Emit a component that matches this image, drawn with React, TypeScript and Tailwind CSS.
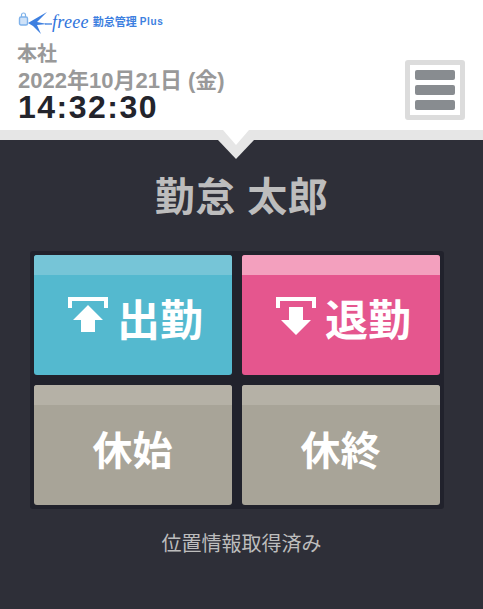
const FONT = "font-['Liberation_Sans','Noto_Sans_CJK_JP',sans-serif]";

function Logo() {
  return (
    <div className="flex h-[24px] items-center">
      <svg width="34" height="24" viewBox="0 0 34 24" className="block">
        <rect x="1.5" y="7" width="8" height="8" rx="1.5" fill="#cfe2f8" stroke="#7fb2ea" strokeWidth="1.4" />
        <path d="M3.5 7V5a2 2 0 0 1 4 0v2" fill="none" stroke="#7fb2ea" strokeWidth="1.2" />
        <path d="M10 13 L29 2 L19 12 L29 14 L19 15 L23 24 L15 16 Z" fill="#3d7fe0" />
        <path d="M27 14 H34" stroke="#3d7fe0" strokeWidth="1.3" />
      </svg>
      <span className="font-['Liberation_Serif',serif] text-[18px] leading-none tracking-[0.3px] text-[#2f74dc] italic">freee</span>
      <span className="ml-[4px] text-[11px] leading-none font-bold text-[#3d7fe0]">勤怠管理</span>
      <span className="ml-[3px] text-[10px] leading-none font-bold tracking-[0.6px] text-[#3d7fe0]">Plus</span>
    </div>
  );
}

function Punch({
  label,
  bg,
  top,
  icon,
}: {
  label: string;
  bg: string;
  top: string;
  icon?: "up" | "down";
}) {
  return (
    <button className={`flex h-[120px] w-[198px] flex-col overflow-hidden rounded-[3px] ${bg}`}>
      <div className={`h-[20px] w-full shrink-0 ${top}`} />
      <div className="flex flex-1 items-center justify-center pb-[10px] text-white">
        {icon === "up" && (
          <svg width="40" height="35" viewBox="0 0 40 35" className="mr-[9px] ml-[6px] -mt-[12px] block">
            <path d="M0 0H40V11H36V4H4V11H0Z" fill="#fff" />
            <path d="M20 8 L35 23 H27 V35 H13 V23 H5 Z" fill="#fff" />
          </svg>
        )}
        {icon === "down" && (
          <svg width="40" height="38" viewBox="0 0 40 38" className="mr-[9px] ml-[6px] -mt-[9px] block">
            <path d="M0 0H40V11H36V4H4V11H0Z" fill="#fff" />
            <path d="M13 10H27V23H35L20 38L5 23H13Z" fill="#fff" />
          </svg>
        )}
        <span className={`${icon ? "mt-[2px] text-[43px]" : "mt-[1px] text-[40px]"} leading-none font-bold`}>{label}</span>
      </div>
    </button>
  );
}

export default function App() {
  return (
    <div className={`flex h-[609px] w-[483px] flex-col overflow-hidden bg-[#2e2f38] ${FONT}`}>
      <header className="flex h-[130px] shrink-0 bg-white">
        <div className="flex-1 pt-[10px] pl-[18px]">
          <Logo />
          <div className="mt-[8px] -ml-[1px] text-[20px] leading-[24px] font-bold text-[#999999]">本社</div>
          <div className="mt-[4px] text-[22px] leading-[21px] font-bold text-[#999999]">2022年10月21日 (金)</div>
          <div className="mt-[1px] text-[32px] leading-[30px] font-bold tracking-[1.5px] text-[#23242c]">14:32:30</div>
        </div>
        <div className="pt-[60px] pr-[18px]">
          <div className="flex h-[60px] w-[60px] flex-col items-center justify-center gap-[5px] rounded-[3px] border-[5px] border-[#dcdcdc] bg-white">
            <div className="h-[10px] w-[40px] rounded-[2px] bg-[#888c90]" />
            <div className="h-[10px] w-[40px] rounded-[2px] bg-[#888c90]" />
            <div className="h-[10px] w-[40px] rounded-[2px] bg-[#888c90]" />
          </div>
        </div>
      </header>
      <div className="relative h-[10px] shrink-0 bg-[#e6e6e6]">
        <svg width="40" height="30" viewBox="0 0 40 30" className="absolute top-0 left-[216px] block">
          <path d="M2 10 H38 L20 29 Z" fill="#e6e6e6" />
          <path d="M7 0 H33 L20 15 Z" fill="#ffffff" />
        </svg>
      </div>
      <main className="flex flex-1 flex-col items-center">
        <h1 className="mt-[33px] text-[40px] leading-[48px] font-bold tracking-[0.5px] text-[#bdbdbd]">勤怠 太郎</h1>
        <div className="mt-[30px] mr-[10px] grid grid-cols-2 gap-[10px] rounded-[3px] bg-[#21222c] p-[4px]">
          <Punch label="出勤" bg="bg-[#54b9cf]" top="bg-[#76c5d7]" icon="up" />
          <Punch label="退勤" bg="bg-[#e5568e]" top="bg-[#f3a0be]" icon="down" />
          <Punch label="休始" bg="bg-[#a8a498]" top="bg-[#b5b1a6]" />
          <Punch label="休終" bg="bg-[#a8a498]" top="bg-[#b5b1a6]" />
        </div>
        <p className="mt-[21px] text-[20px] leading-[28px] text-[#bdbdbd]">位置情報取得済み</p>
      </main>
    </div>
  );
}
